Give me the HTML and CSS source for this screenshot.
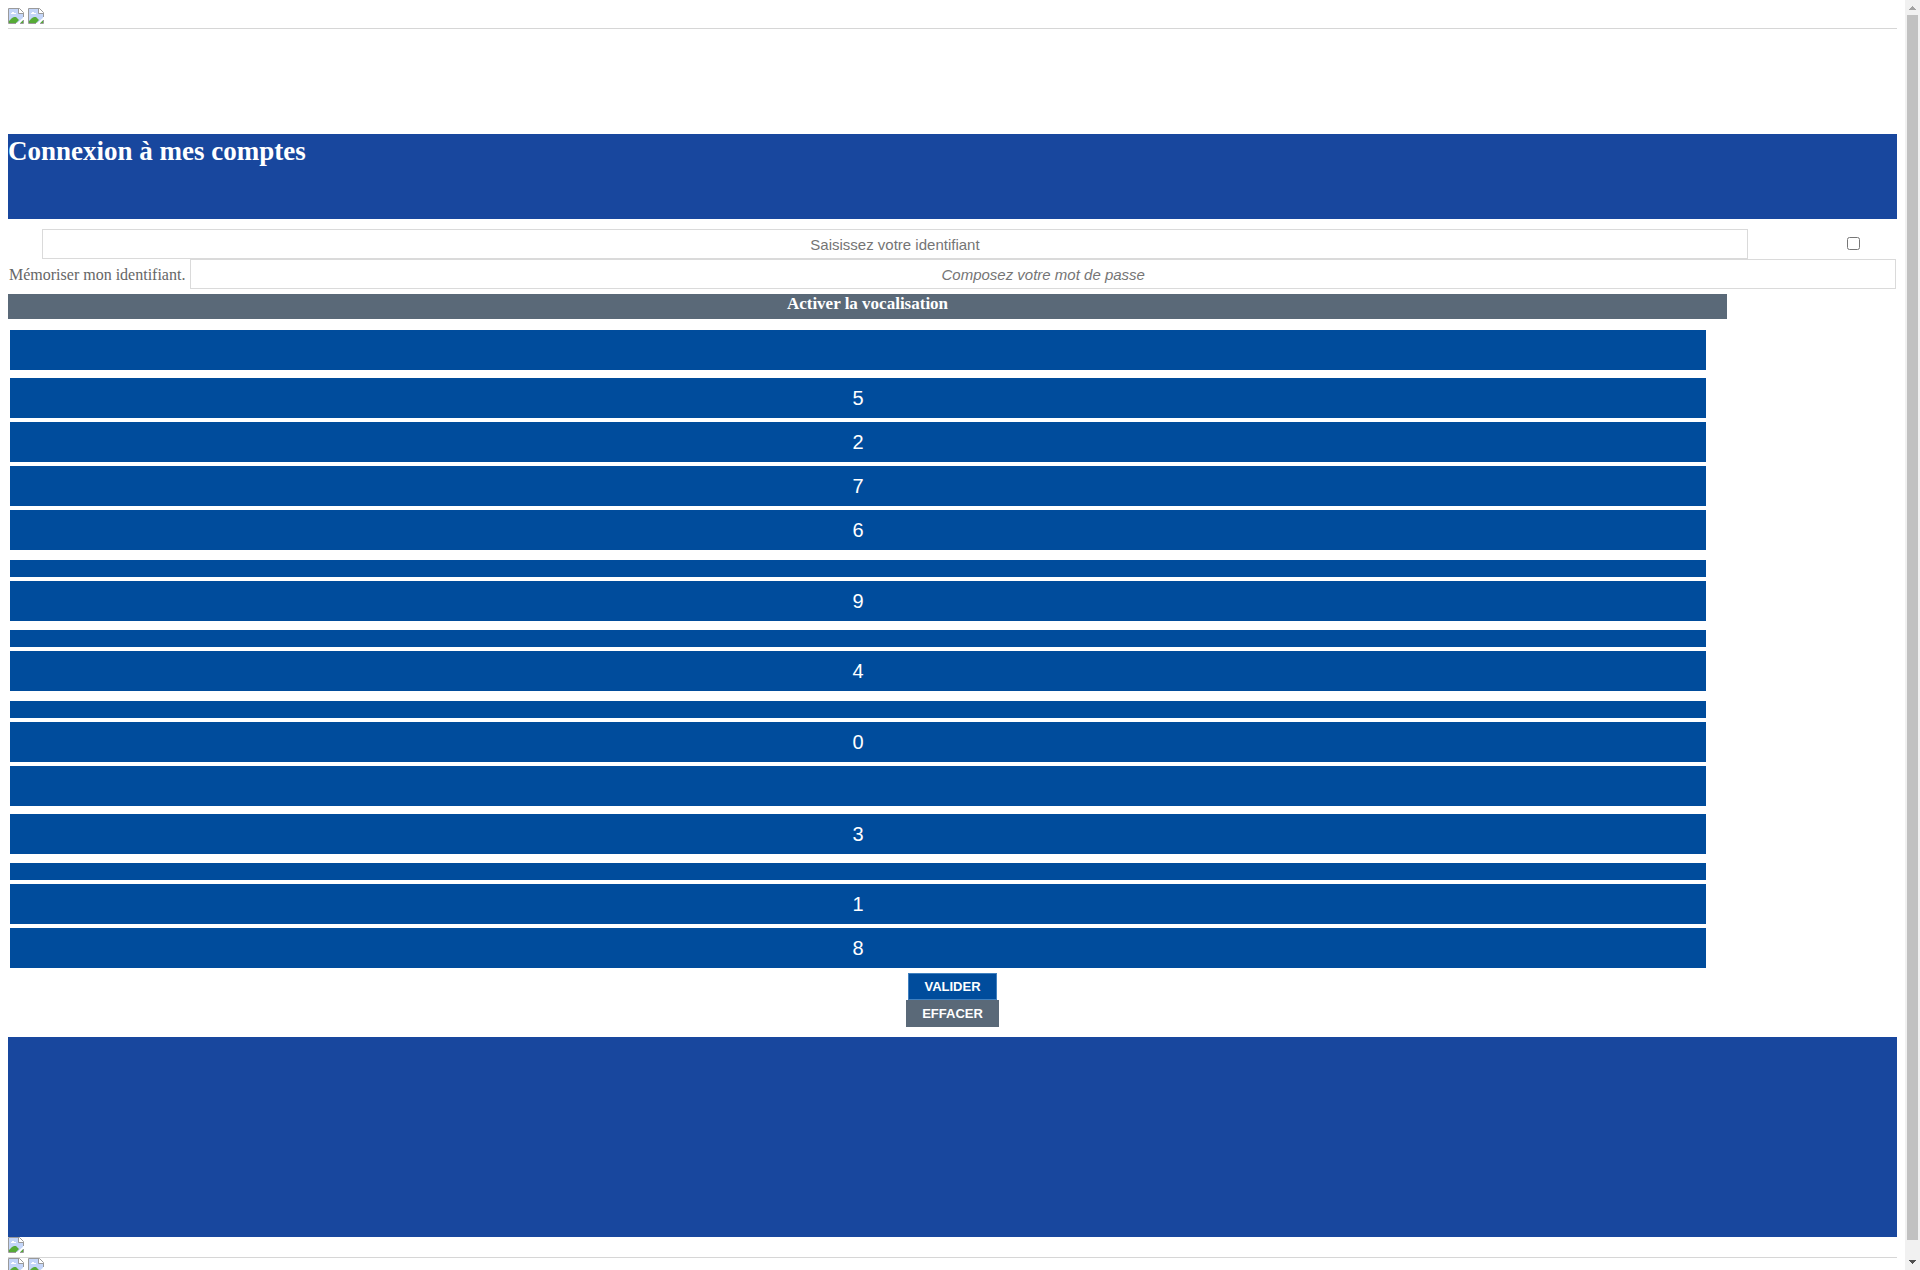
FILE: index.html
```html
<!DOCTYPE html>
<html lang="fr">
<head>
<meta charset="utf-8">
<title>Connexion à mes comptes</title>
<link rel="stylesheet" href="styles.css">
</head>
<body>
<svg class="defs" aria-hidden="true">
  <symbol id="missing" viewBox="0 0 16 16">
    <path fill="#c3d5f8" d="M1 1h10v4h4v10H1z"/>
    <path fill="#fff" d="M3 6V5h1V4h2v1h2v1zM11 1l4 4h-4z"/>
    <path fill="#56ab36" d="M1 15v-2l3-3 2-1h2l3 3-3 3zM12 15l3-3v3z"/>
    <path fill="#fff" d="M8 16l8-7v2l-5 5z"/>
    <path fill="none" stroke="#9a9a9a" d="M8 15.500H.5V.5h11l4 4V9M10.500 1v4.500H15M12 15.500h3.500V12"/>
  </symbol>
</svg>
<div class="page">
  <header class="images ruled">
    <svg class="missing"><use href="#missing"/></svg>
    <svg class="missing"><use href="#missing"/></svg>
  </header>
  <main>
    <div class="banner"><h1>Connexion à mes comptes</h1></div>
    <form>
      <div class="row row-id">
        <input class="field" type="text" aria-label="Identifiant" placeholder="Saisissez votre identifiant">
        <input class="check" type="checkbox" id="remember">
      </div>
      <div class="row row-pass">
        <label for="remember">Mémoriser mon identifiant.</label>
        <input class="field field-pass" type="password" aria-label="Mot de passe" placeholder="Composez votre mot de passe">
      </div>
      <div class="voice">Activer la vocalisation</div>
      <div class="keypad">
        <button type="button" class="key spaced" aria-label="Vide"></button>
        <button type="button" class="key">5</button>
        <button type="button" class="key">2</button>
        <button type="button" class="key">7</button>
        <button type="button" class="key wider">6</button>
        <button type="button" class="key thin" aria-label="Vide"></button>
        <button type="button" class="key wide">9</button>
        <button type="button" class="key thin" aria-label="Vide"></button>
        <button type="button" class="key wider">4</button>
        <button type="button" class="key thin" aria-label="Vide"></button>
        <button type="button" class="key">0</button>
        <button type="button" class="key spaced" aria-label="Vide"></button>
        <button type="button" class="key wide">3</button>
        <button type="button" class="key thin" aria-label="Vide"></button>
        <button type="button" class="key">1</button>
        <button type="button" class="key">8</button>
      </div>
      <div class="actions">
        <button type="submit" class="action submit">VALIDER</button>
        <button type="reset" class="action">EFFACER</button>
      </div>
    </form>
  </main>
  <footer>
    <div class="block"></div>
    <div class="images ruled">
      <svg class="missing"><use href="#missing"/></svg>
    </div>
    <div class="images">
      <svg class="missing"><use href="#missing"/></svg>
      <svg class="missing"><use href="#missing"/></svg>
    </div>
  </footer>
</div>
<div class="scrollbar" aria-hidden="true">
  <svg class="arrow" viewBox="0 0 15 15" shape-rendering="crispEdges"><path fill="#a3a3a3" d="M7 6h1v1h1v1h1v1h1v1H4V9h1V8h1V7h1z"/></svg>
  <div class="thumb"></div>
  <svg class="arrow" viewBox="0 0 15 15" shape-rendering="crispEdges"><path fill="#505050" d="M4 5h7v1h-1v1H9v1H8v1H7V8H6V7H5V6H4z"/></svg>
</div>
</body>
</html>
```
FILE: styles.css
```css
* { box-sizing: border-box; }
body {
  display: flex;
  height: 100vh;
  margin: 0;
  overflow: hidden;
  background: #fff;
  font: 16px "Liberation Serif", serif;
}
.defs { position: absolute; width: 0; height: 0; }
.page { flex: 1; min-width: 0; padding: 8px; }
.images { display: flex; gap: 4px; }
.ruled { padding-bottom: 4px; border-bottom: 1px solid #d6d6d6; }
.missing { width: 16px; height: 16px; }
.banner {
  height: 85px;
  margin: 105px 0 10px;
  background: #18479e;
  color: #fff;
}
h1 { margin: 0; font-size: 27px; line-height: 34px; }
.row { display: flex; align-items: baseline; }
.row-id { justify-content: space-between; padding: 0 37px 0 34px; }
.row-pass { gap: 5px; padding: 0 1px; }
label { color: #666; white-space: nowrap; }
.field {
  width: calc(94% - 3px);
  height: 30px;
  padding: 1px 2px;
  border: 1px solid #dadada;
  font: 15px "Liberation Sans", sans-serif;
  text-align: center;
}
.field-pass { flex: 1; font-style: italic; }
.field::placeholder { color: #757575; }
.check { width: 13px; height: 13px; margin: 0; }
.voice {
  width: 91%;
  height: 25px;
  margin-top: 5px;
  background: #5a6978;
  color: #fff;
  font-size: 17px;
  font-weight: bold;
  line-height: 19px;
  text-align: center;
}
.keypad {
  display: flex;
  flex-direction: column;
  gap: 4px;
  width: 91%;
  padding: 11px 21px 5px 2px;
}
.key {
  height: 40px;
  padding: 0;
  border: 0;
  background: #004c9c;
  color: #fff;
  font: 20px "Liberation Sans", sans-serif;
}
.thin { height: 17px; }
.spaced { margin-bottom: 4px; }
.wide { margin-bottom: 5px; }
.wider { margin-bottom: 6px; }
.actions { display: flex; flex-direction: column; align-items: center; }
.action {
  height: 27px;
  padding: 0 16px;
  border: 0;
  background: #5a6978;
  color: #fff;
  font: bold 13px "Liberation Sans", sans-serif;
}
.submit { padding: 0 15px; border: 1px solid #4080bf; background: #004c9c; }
.block { height: 200px; margin-top: 10px; background: #18479e; }
.scrollbar {
  display: flex;
  flex-direction: column;
  width: 15px;
  background: #f1f1f1;
}
.arrow { width: 15px; height: 15px; }
.thumb { flex: 1; margin: 0 2px 15px; background: #c1c1c1; }
```
